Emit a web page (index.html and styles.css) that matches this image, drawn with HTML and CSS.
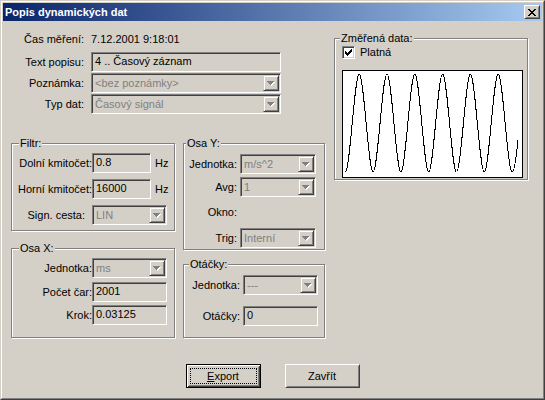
FILE: index.html
```html
<!DOCTYPE html>
<html lang="cs">
<head>
<meta charset="utf-8">
<title>Popis dynamických dat</title>
<link rel="stylesheet" href="styles.css">
</head>
<body>
<div class="window">
  <div class="frame">
    <div class="titlebar">
      <span class="title">Popis dynamických dat</span>
      <div class="close">
        <svg width="8" height="7" viewBox="0 0 8 7" shape-rendering="crispEdges"><path fill="#000" d="M0 0h2v1H0zM6 0h2v1H6zM1 1h2v1H1zM5 1h2v1H5zM2 2h4v1H2zM3 3h2v1H3zM2 4h4v1H2zM1 5h2v1H1zM5 5h2v1H5zM0 6h2v1H0zM6 6h2v1H6z"/></svg>
      </div>
    </div>
    <div class="body">
      <div class="main">
        <div class="leftcol">
          <div class="info">
            <div class="irow irow-time"><span class="lbl">Čas měření:</span><span class="val">7.12.2001 9:18:01</span></div>
            <div class="irow"><span class="lbl">Text popisu:</span><div class="edit w190">4 .. Časový záznam</div></div>
            <div class="irow"><span class="lbl">Poznámka:</span><div class="combo w190"><span class="ctext">&lt;bez poznámky&gt;</span><span class="cbtn"><svg width="8" height="5" viewBox="0 0 8 5" shape-rendering="crispEdges"><path fill="#fff" d="M1 1h7v1H1zM2 2h5v1H2zM3 3h3v1H3zM4 4h1v1H4z"/><path fill="#808080" d="M0 0h7v1H0zM1 1h5v1H1zM2 2h3v1H2zM3 3h1v1H3z"/></svg></span></div></div>
            <div class="irow"><span class="lbl">Typ dat:</span><div class="combo w190"><span class="ctext">Časový signál</span><span class="cbtn"><svg width="8" height="5" viewBox="0 0 8 5" shape-rendering="crispEdges"><path fill="#fff" d="M1 1h7v1H1zM2 2h5v1H2zM3 3h3v1H3zM4 4h1v1H4z"/><path fill="#808080" d="M0 0h7v1H0zM1 1h5v1H1zM2 2h3v1H2zM3 3h1v1H3z"/></svg></span></div></div>
          </div>
          <div class="groups">
            <div class="gcol gcol-l">
              <div class="group g-filtr">
                <span class="legend lg-filtr">Filtr:</span>
                <div class="grow"><span class="gl">Dolní kmitočet:</span><div class="edit w59">0.8</div><span class="unit">Hz</span></div>
                <div class="grow"><span class="gl">Horní kmitočet:</span><div class="edit w59">16000</div><span class="unit">Hz</span></div>
                <div class="grow"><span class="gl gl-sign">Sign. cesta:</span><div class="combo w75"><span class="ctext">LIN</span><span class="cbtn"><svg width="8" height="5" viewBox="0 0 8 5" shape-rendering="crispEdges"><path fill="#fff" d="M1 1h7v1H1zM2 2h5v1H2zM3 3h3v1H3zM4 4h1v1H4z"/><path fill="#808080" d="M0 0h7v1H0zM1 1h5v1H1zM2 2h3v1H2zM3 3h1v1H3z"/></svg></span></div></div>
              </div>
              <div class="group g-osax">
                <span class="legend lg-osax">Osa X:</span>
                <div class="grow"><span class="gl">Jednotka:</span><div class="combo w75"><span class="ctext">ms</span><span class="cbtn"><svg width="8" height="5" viewBox="0 0 8 5" shape-rendering="crispEdges"><path fill="#fff" d="M1 1h7v1H1zM2 2h5v1H2zM3 3h3v1H3zM4 4h1v1H4z"/><path fill="#808080" d="M0 0h7v1H0zM1 1h5v1H1zM2 2h3v1H2zM3 3h1v1H3z"/></svg></span></div></div>
                <div class="grow mt4"><span class="gl">Počet čar:</span><div class="edit w75">2001</div></div>
                <div class="grow mt3"><span class="gl">Krok:</span><div class="edit w75">0.03125</div></div>
              </div>
            </div>
            <div class="gcol gcol-r">
              <div class="group g-osay">
                <span class="legend lg-osay">Osa Y:</span>
                <div class="grow"><span class="gl">Jednotka:</span><div class="combo w76"><span class="ctext">m/s^2</span><span class="cbtn"><svg width="8" height="5" viewBox="0 0 8 5" shape-rendering="crispEdges"><path fill="#fff" d="M1 1h7v1H1zM2 2h5v1H2zM3 3h3v1H3zM4 4h1v1H4z"/><path fill="#808080" d="M0 0h7v1H0zM1 1h5v1H1zM2 2h3v1H2zM3 3h1v1H3z"/></svg></span></div></div>
                <div class="grow mt3"><span class="gl">Avg:</span><div class="combo w76"><span class="ctext">1</span><span class="cbtn"><svg width="8" height="5" viewBox="0 0 8 5" shape-rendering="crispEdges"><path fill="#fff" d="M1 1h7v1H1zM2 2h5v1H2zM3 3h3v1H3zM4 4h1v1H4z"/><path fill="#808080" d="M0 0h7v1H0zM1 1h5v1H1zM2 2h3v1H2zM3 3h1v1H3z"/></svg></span></div></div>
                <div class="grow grow-text mt9"><span class="gl">Okno:</span></div>
                <div class="grow mt9"><span class="gl">Trig:</span><div class="combo w76"><span class="ctext">Interní</span><span class="cbtn"><svg width="8" height="5" viewBox="0 0 8 5" shape-rendering="crispEdges"><path fill="#fff" d="M1 1h7v1H1zM2 2h5v1H2zM3 3h3v1H3zM4 4h1v1H4z"/><path fill="#808080" d="M0 0h7v1H0zM1 1h5v1H1zM2 2h3v1H2zM3 3h1v1H3z"/></svg></span></div></div>
              </div>
              <div class="group g-otacky">
                <span class="legend lg-otacky">Otáčky:</span>
                <div class="grow"><span class="gl">Jednotka:</span><div class="combo w75"><span class="ctext">---</span><span class="cbtn"><svg width="8" height="5" viewBox="0 0 8 5" shape-rendering="crispEdges"><path fill="#fff" d="M1 1h7v1H1zM2 2h5v1H2zM3 3h3v1H3zM4 4h1v1H4z"/><path fill="#808080" d="M0 0h7v1H0zM1 1h5v1H1zM2 2h3v1H2zM3 3h1v1H3z"/></svg></span></div></div>
                <div class="grow mt11"><span class="gl">Otáčky:</span><div class="edit w75">0</div></div>
              </div>
            </div>
          </div>
        </div>
        <div class="rightcol">
          <div class="group g-data">
            <span class="legend lg-data">Změřená data:</span>
            <div class="checkrow">
              <span class="check"><svg width="7" height="7" viewBox="0 0 7 7" shape-rendering="crispEdges"><path fill="#000" d="M6 0h1v1H6zM5 1h2v1H5zM0 2h1v1H0zM4 2h3v1H4zM0 3h2v1H0zM3 3h3v1H3zM0 4h5v1H0zM1 5h3v1H1zM2 6h1v1H2z"/></svg></span>
              <span class="checklbl">Platná</span>
            </div>
            <svg class="chart" width="181" height="108" viewBox="0 0 181 108">
              <rect x="0.5" y="0.5" width="180" height="107" fill="#fff" stroke="#000"/>
              <path fill="none" stroke="#000" stroke-width="1" shape-rendering="crispEdges" d="M3.3 102C7.93 102 12.57 4 17.2 4C21.83 4 26.47 102 31.1 102C35.73 102 40.37 4 45 4C49.63 4 54.27 102 58.9 102C63.53 102 68.17 4 72.8 4C77.43 4 82.07 102 86.7 102C91.33 102 95.97 4 100.6 4C105.23 4 109.87 102 114.5 102C119.13 102 123.77 4 128.4 4C133.03 4 137.67 102 142.3 102C146.93 102 151.57 4 156.2 4C160.83 4 165.47 102 170.1 102C172.3 102 174.4 86 176 70"/>
            </svg>
          </div>
        </div>
      </div>
      <div class="buttons">
        <div class="btn btn-default"><span><span class="u">E</span>xport</span></div>
        <div class="btn">Zavřít</div>
      </div>
    </div>
  </div>
</div>
</body>
</html>
```

FILE: styles.css
```css
* { box-sizing: border-box; }
html, body { margin: 0; padding: 0; }
body {
  width: 545px;
  height: 400px;
  overflow: hidden;
  background: #d4d0c8;
  font-family: "Liberation Sans", Arial, sans-serif;
  font-size: 11px;
  line-height: 13px;
  color: #000;
}
.window {
  width: 545px;
  height: 400px;
  border: 1px solid;
  border-color: #d4d0c8 #404040 #404040 #d4d0c8;
  background: #d4d0c8;
}
.frame {
  height: 100%;
  border: 1px solid;
  border-color: #fff #808080 #808080 #fff;
  padding: 1px;
  display: flex;
  flex-direction: column;
}
.titlebar {
  flex: none;
  height: 18px;
  display: flex;
  align-items: center;
  justify-content: space-between;
  padding: 0 2px;
  background: linear-gradient(to right, #0a246a, #a6caf0);
}
.title { color: #fff; font-weight: bold; white-space: nowrap; }
.close {
  width: 16px;
  height: 14px;
  display: flex;
  align-items: center;
  justify-content: center;
  background: #d4d0c8;
  border: 1px solid;
  border-color: #fff #404040 #404040 #fff;
  box-shadow: inset 1px 1px #d4d0c8, inset -1px -1px #808080;
}
.close svg, .cbtn svg, .check svg { display: block; }

.body { flex: 1; display: flex; flex-direction: column; }
.main { display: flex; align-items: flex-start; margin-left: 8px; }
.leftcol { width: 314px; flex: none; }
.rightcol { margin-left: 9px; padding-top: 17px; }

.info { padding-top: 12px; display: flex; flex-direction: column; gap: 1px; }
.irow { display: flex; align-items: center; }
.irow-time { height: 13px; margin-bottom: 5px; }
.lbl { width: 73px; margin-right: 7px; text-align: right; white-space: nowrap; flex: none; }
.val { white-space: nowrap; }

.edit {
  height: 20px;
  flex: none;
  border: 1px solid;
  border-color: #808080 #fff #fff #808080;
  box-shadow: inset 1px 1px #404040, inset -1px -1px #d4d0c8;
  background: #d4d0c8;
  padding: 0 3px;
  line-height: 16px;
  white-space: nowrap;
  overflow: hidden;
}
.combo {
  height: 20px;
  flex: none;
  display: flex;
  border: 1px solid;
  border-color: #808080 #fff #fff #808080;
  box-shadow: inset 1px 1px #404040, inset -1px -1px #d4d0c8;
  background: #d4d0c8;
  padding: 1px;
}
.ctext {
  flex: 1;
  color: #808080;
  padding-left: 2px;
  line-height: 16px;
  white-space: nowrap;
  overflow: hidden;
}
.cbtn {
  width: 16px;
  height: 16px;
  flex: none;
  display: flex;
  align-items: center;
  justify-content: center;
  border: 1px solid;
  border-color: #d4d0c8 #404040 #404040 #d4d0c8;
  box-shadow: inset 1px 1px #fff, inset -1px -1px #808080;
}
.w190 { width: 190px; }
.w59 { width: 59px; }
.w75 { width: 75px; }
.w76 { width: 76px; }

.groups { display: flex; gap: 8px; margin-top: 29px; }
.gcol { display: flex; flex-direction: column; flex: none; }
.gcol-l { width: 164px; gap: 17px; }
.gcol-r { width: 142px; gap: 14px; }

.group {
  position: relative;
  border: 1px solid #808080;
  box-shadow: inset 1px 1px #fff, 1px 1px #fff;
  display: flex;
  flex-direction: column;
}
.legend {
  position: absolute;
  top: -7px;
  padding: 0 1px;
  background: #d4d0c8;
  white-space: nowrap;
  line-height: 13px;
}
.lg-filtr, .lg-osax { left: 7px; }
.lg-osay { left: 2px; }
.lg-otacky, .lg-data { left: 5px; }

.grow { display: flex; align-items: center; flex: none; }
.grow-text { height: 13px; }
.gl { text-align: right; white-space: nowrap; flex: none; }
.mt3 { margin-top: 3px; }
.mt4 { margin-top: 4px; }
.mt9 { margin-top: 9px; }
.mt11 { margin-top: 11px; }

.g-filtr { height: 88px; padding-top: 9px; gap: 6px; }
.g-filtr .gl, .g-osax .gl { width: 80px; }
.g-filtr .gl-sign { padding-right: 7px; }
.unit { margin-left: 4px; }
.g-osax { height: 90px; padding-top: 9px; }
.g-osay { height: 107px; padding-top: 10px; }
.g-osay .gl { width: 53px; margin-right: 3px; }
.g-otacky { height: 74px; padding-top: 10px; }
.g-otacky .gl { width: 56px; margin-right: 3px; }

.g-data { width: 194px; height: 142px; padding: 7px 0 0 7px; }
.checkrow { display: flex; align-items: center; height: 13px; }
.check {
  width: 13px;
  height: 13px;
  flex: none;
  border: 1px solid;
  border-color: #808080 #fff #fff #808080;
  box-shadow: inset 1px 1px #404040, inset -1px -1px #d4d0c8;
  background: #fff;
  padding: 2px;
}
.checklbl { margin-left: 5px; }
.chart { display: block; margin-top: 11px; }

.buttons { display: flex; justify-content: center; gap: 24px; margin-top: 26px; }
.btn {
  width: 75px;
  height: 24px;
  display: flex;
  align-items: center;
  justify-content: center;
  background: #d4d0c8;
  border: 1px solid;
  border-color: #fff #404040 #404040 #fff;
  box-shadow: inset 1px 1px #d4d0c8, inset -1px -1px #808080;
}
.btn-default {
  border: 1px solid #000;
  box-shadow: inset 1px 1px #fff, inset -1px -1px #404040, inset 2px 2px #d4d0c8, inset -2px -2px #808080;
  outline: 1px dotted #000;
  outline-offset: -5px;
}
.u { text-decoration: underline; }
```
